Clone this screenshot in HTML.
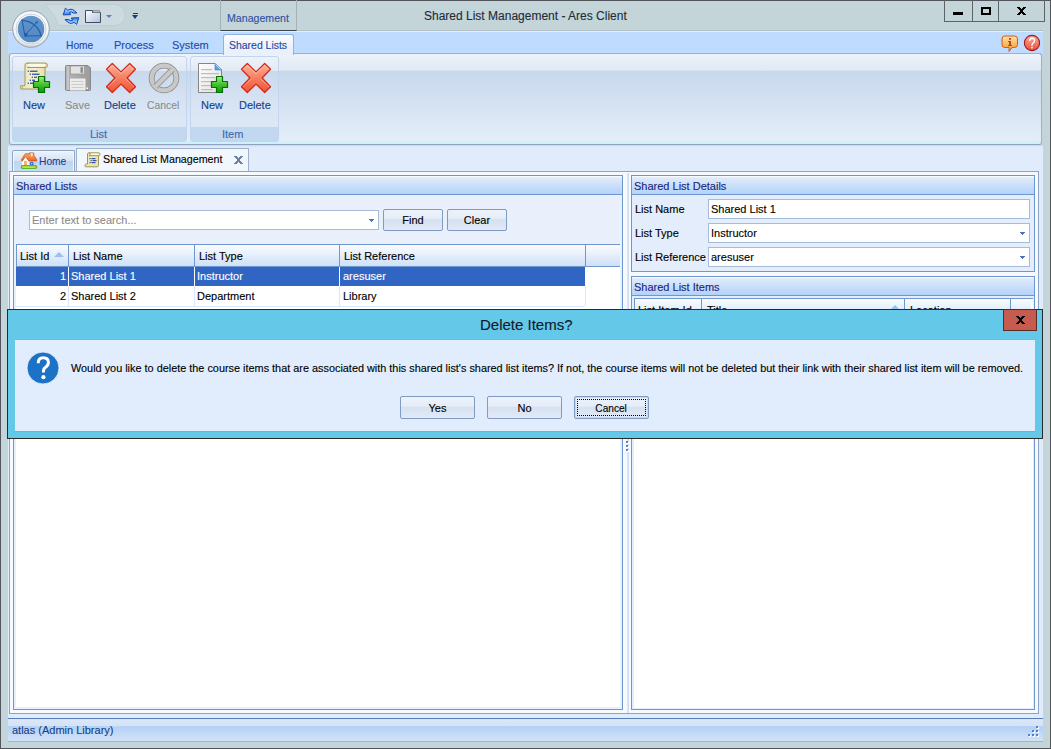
<!DOCTYPE html>
<html><head><meta charset="utf-8">
<style>
*{margin:0;padding:0;box-sizing:border-box}
html,body{width:1051px;height:749px;overflow:hidden;background:#c4d5da;font-family:"Liberation Sans",sans-serif;font-size:11px;color:#000}
.a{position:absolute}
.t{position:absolute;white-space:nowrap;line-height:13px;-webkit-text-stroke:0.12px currentColor}
.btn{position:absolute;border:1px solid #7f9bc4;border-radius:2px;background:linear-gradient(#edf3fb 0,#e4ecf7 45%,#d4e1f1 46%,#e2eaf6 100%);text-align:center;line-height:21px;-webkit-text-stroke:0.12px currentColor}
.hdr{position:absolute;background:linear-gradient(#f5f9fe,#cfe0f7)}
.cell{position:absolute;white-space:nowrap;line-height:13px}
</style></head><body>
<!-- window frame -->
<div class="a" style="left:0;top:0;width:1051px;height:749px;border:1px solid #51545b"></div>
<!-- title -->
<div class="t" style="left:424px;top:10px;font-size:12px;color:#222c38">Shared List Management - Ares Client</div>
<!-- window controls -->
<div class="a" style="left:944px;top:0;width:101px;height:22px;border:1px solid #5b6569;border-top:none"></div>
<div class="a" style="left:972px;top:0;width:1px;height:22px;background:#5b6569"></div>
<div class="a" style="left:998px;top:0;width:1px;height:22px;background:#5b6569"></div>
<div class="a" style="left:953px;top:12px;width:10px;height:3px;background:#000"></div>
<div class="a" style="left:981px;top:7px;width:10px;height:8px;border:2px solid #000"></div>
<svg class="a" style="left:1017px;top:7px" width="9" height="8" shape-rendering="crispEdges"><g fill="#000"><rect x="0" y="0" width="3" height="1"/><rect x="6" y="0" width="3" height="1"/><rect x="1" y="1" width="3" height="1"/><rect x="5" y="1" width="3" height="1"/><rect x="2" y="2" width="5" height="1"/><rect x="3" y="3" width="3" height="1"/><rect x="3" y="4" width="3" height="1"/><rect x="2" y="5" width="5" height="1"/><rect x="1" y="6" width="3" height="1"/><rect x="5" y="6" width="3" height="1"/><rect x="0" y="7" width="3" height="1"/><rect x="6" y="7" width="3" height="1"/></g></svg>

<!-- ribbon tab row -->
<div class="a" style="left:8px;top:30px;width:1035px;height:1px;background:#b3c0c6"></div>
<div class="a" style="left:8px;top:31px;width:1035px;height:23px;background:#bfdbff;border-top:1px solid #e3eefa"></div>
<!-- management contextual header -->
<div class="a" style="left:220px;top:0;width:77px;height:31px;border-left:1px solid #a3b3b8;border-right:1px solid #a3b3b8;border-bottom:1px solid #3a4448"></div>
<div class="t" style="left:227px;top:12px;color:#2d52a0;transform:scaleX(0.965);transform-origin:0 0">Management</div>
<!-- ribbon panel -->
<div class="a" style="left:9px;top:53px;width:1033px;height:92px;border:1px solid #8db2e3;border-bottom-color:#8ea2c0;border-radius:3px;background:linear-gradient(#eef3fa,#e1e9f4 18%,#c7d8ec 19%,#d5e2f2 55%,#e4eefa 97%,#cdf0fb 97%)"></div>
<!-- tabs -->
<div class="t" style="left:66px;top:39px;color:#1c4aa8;transform:scaleX(0.93);transform-origin:0 0">Home</div>
<div class="t" style="left:114px;top:39px;color:#1c4aa8">Process</div>
<div class="t" style="left:172px;top:39px;color:#1c4aa8">System</div>
<div class="a" style="left:223px;top:34px;width:71px;height:21px;border:1px solid #8db2e3;border-bottom:none;border-radius:3px 3px 0 0;background:linear-gradient(#fafcff,#ecf2fa 60%,#eaf0f9)"></div>
<div class="t" style="left:229px;top:39px;color:#1c4aa8;transform:scaleX(0.95);transform-origin:0 0">Shared Lists</div>

<!-- group List -->
<div class="a" style="left:12px;top:56px;width:175px;height:86px;border:1px solid #c2d5ec;border-radius:3px;background:linear-gradient(#eef3fa,#e1e9f4 16%,#c9d9ed 17%,#d9e5f4 60%,#e0eaf7)"></div>
<div class="a" style="left:13px;top:127px;width:173px;height:14px;background:#c2d8f0"></div>
<div class="t" style="left:23px;top:99px;color:#15428b">New</div>
<div class="t" style="left:65px;top:99px;color:#8d8d8d">Save</div>
<div class="t" style="left:104px;top:99px;color:#15428b">Delete</div>
<div class="t" style="left:147px;top:99px;color:#8d8d8d;transform:scaleX(0.94);transform-origin:0 0">Cancel</div>
<div class="t" style="left:90px;top:128px;color:#3e6aaa">List</div>
<!-- group Item -->
<div class="a" style="left:190px;top:56px;width:89px;height:86px;border:1px solid #c2d5ec;border-radius:3px;background:linear-gradient(#eef3fa,#e1e9f4 16%,#c9d9ed 17%,#d9e5f4 60%,#e0eaf7)"></div>
<div class="a" style="left:191px;top:127px;width:87px;height:14px;background:#c2d8f0"></div>
<div class="t" style="left:201px;top:99px;color:#15428b">New</div>
<div class="t" style="left:239px;top:99px;color:#15428b">Delete</div>
<div class="t" style="left:222px;top:128px;color:#3e6aaa">Item</div>

<!-- document tab area -->
<div class="a" style="left:8px;top:145px;width:1035px;height:574px;background:linear-gradient(#c9d5e6,#e0ebfb 2px)"></div>
<div class="a" style="left:12px;top:150px;width:63px;height:22px;border-radius:2px 2px 0 0;border:1px solid #8fa5c8;border-bottom:none;background:linear-gradient(#eef3fb,#d6e3f4 46%,#bfd4ee 48%,#c9dcf3);box-shadow:inset 1px 1px 0 #f4f8fd,inset -1px 0 0 #f4f8fd"></div>
<div class="t" style="left:39px;top:155px;color:#1c3f9c;transform:scaleX(0.93);transform-origin:0 0">Home</div>
<div class="a" style="left:76px;top:148px;width:173px;height:25px;border:1px solid #9cb0cf;border-bottom:none;background:#f2f7fd"></div>
<div class="t" style="left:103px;top:153px;color:#000;transform:scaleX(0.972);transform-origin:0 0">Shared List Management</div>
<svg class="a" style="left:234px;top:156px" width="9" height="8" shape-rendering="crispEdges"><g fill="#6e82a6"><rect x="0" y="0" width="3" height="1"/><rect x="6" y="0" width="3" height="1"/><rect x="1" y="1" width="3" height="1"/><rect x="5" y="1" width="3" height="1"/><rect x="2" y="2" width="5" height="1"/><rect x="3" y="3" width="3" height="1"/><rect x="3" y="4" width="3" height="1"/><rect x="2" y="5" width="5" height="1"/><rect x="1" y="6" width="3" height="1"/><rect x="5" y="6" width="3" height="1"/><rect x="0" y="7" width="3" height="1"/><rect x="6" y="7" width="3" height="1"/></g></svg>

<!-- content area -->
<div class="a" style="left:9px;top:171px;width:1030px;height:543px;border:1px solid #8ea4c6;background:#f6f9fe"></div>

<!-- left panel -->
<div class="a" style="left:13px;top:175px;width:610px;height:535px;border:1px solid #6e97d0;background:#e9f0fb"></div>
<div class="hdr" style="left:14px;top:176px;width:608px;height:18px;background:linear-gradient(#fff 0,#e0ebfa 10%,#b3d2f9)"></div>
<div class="a" style="left:14px;top:194px;width:608px;height:1px;background:#6e97d0"></div>
<div class="t" style="left:16px;top:180px;color:#1a2680">Shared Lists</div>
<!-- search -->
<div class="a" style="left:29px;top:210px;width:350px;height:20px;border:1px solid #a5bcdc;background:#fff"></div>
<div class="t" style="left:32px;top:214px;color:#8c8c8c">Enter text to search...</div>
<div class="btn" style="left:383px;top:209px;width:60px;height:22px">Find</div>
<div class="btn" style="left:447px;top:209px;width:60px;height:22px">Clear</div>
<!-- grid -->
<div class="a" style="left:16px;top:244px;width:604px;height:463px;background:#fff;border-top:1px solid #6e97d0"></div>

<!-- grid header -->
<div class="hdr" style="left:16px;top:245px;width:604px;height:21px;background:linear-gradient(#fafcff,#cfe0f7)"></div>
<div class="a" style="left:16px;top:266px;width:570px;height:1px;background:#6e97d0"></div>
<div class="a" style="left:586px;top:266px;width:34px;height:1px;background:#6e97d0"></div>
<div class="a" style="left:16px;top:245px;width:1px;height:21px;background:#6e97d0"></div>
<div class="a" style="left:68px;top:245px;width:1px;height:21px;background:#6e97d0"></div>
<div class="a" style="left:194px;top:245px;width:1px;height:21px;background:#6e97d0"></div>
<div class="a" style="left:339px;top:245px;width:1px;height:21px;background:#6e97d0"></div>
<div class="a" style="left:585px;top:245px;width:1px;height:21px;background:#6e97d0"></div>
<div class="t" style="left:20px;top:250px">List Id</div>
<div class="a" style="left:54px;top:252px;width:0;height:0;border-left:5px solid transparent;border-right:5px solid transparent;border-bottom:5px solid #9cc0ee"></div>
<div class="t" style="left:73px;top:250px">List Name</div>
<div class="t" style="left:199px;top:250px">List Type</div>
<div class="t" style="left:344px;top:250px">List Reference</div>
<!-- rows -->
<div class="a" style="left:16px;top:267px;width:569px;height:19px;background:#3165c4"></div>
<div class="a" style="left:68px;top:267px;width:1px;height:19px;background:#fff"></div>
<div class="a" style="left:194px;top:267px;width:1px;height:19px;background:#fff"></div>
<div class="a" style="left:339px;top:267px;width:1px;height:19px;background:#fff"></div>
<div class="t" style="left:60px;top:270px;color:#fff">1</div>
<div class="t" style="left:71px;top:270px;color:#fff">Shared List 1</div>
<div class="t" style="left:197px;top:270px;color:#fff">Instructor</div>
<div class="t" style="left:343px;top:270px;color:#fff">aresuser</div>
<div class="a" style="left:16px;top:306px;width:569px;height:1px;background:#dbe7f8"></div>
<div class="a" style="left:68px;top:286px;width:1px;height:20px;background:#dbe7f8"></div>
<div class="a" style="left:194px;top:286px;width:1px;height:20px;background:#dbe7f8"></div>
<div class="a" style="left:339px;top:286px;width:1px;height:20px;background:#dbe7f8"></div>
<div class="a" style="left:585px;top:286px;width:1px;height:20px;background:#dbe7f8"></div>
<div class="t" style="left:60px;top:290px">2</div>
<div class="t" style="left:71px;top:290px">Shared List 2</div>
<div class="t" style="left:197px;top:290px">Department</div>
<div class="t" style="left:343px;top:290px">Library</div>

<svg class="a" style="left:369px;top:219px" width="5" height="3" shape-rendering="crispEdges"><g fill="#4a74b4"><rect x="0" y="0" width="5" height="1"/><rect x="1" y="1" width="3" height="1"/><rect x="2" y="2" width="1" height="1"/></g></svg>
<!-- splitter -->
<div class="a" style="left:627px;top:173px;width:2px;height:540px;background:linear-gradient(90deg,#dde9f9,#c6dbf6)"></div>
<svg class="a" style="left:625px;top:440px" width="5" height="13" shape-rendering="crispEdges"><g fill="#fff"><rect x="2" y="2" width="2" height="2"/><rect x="2" y="6" width="2" height="2"/><rect x="2" y="10" width="2" height="2"/></g><g fill="#4a7cc8"><rect x="1" y="1" width="2" height="1"/><rect x="1" y="2" width="1" height="1"/><rect x="1" y="5" width="2" height="1"/><rect x="1" y="6" width="1" height="1"/><rect x="1" y="9" width="2" height="1"/><rect x="1" y="10" width="1" height="1"/></g><g fill="#7aa2dc"><rect x="2" y="2" width="1" height="1"/><rect x="2" y="6" width="1" height="1"/><rect x="2" y="10" width="1" height="1"/></g></svg>

<!-- right panel: details -->
<div class="a" style="left:631px;top:175px;width:404px;height:97px;border:1px solid #6e97d0;background:#e3edfb"></div>
<div class="hdr" style="left:632px;top:176px;width:402px;height:18px;background:linear-gradient(#fff 0,#e0ebfa 10%,#b3d2f9)"></div>
<div class="a" style="left:632px;top:194px;width:402px;height:1px;background:#6e97d0"></div>
<div class="t" style="left:634px;top:180px;color:#1a2680">Shared List Details</div>
<div class="t" style="left:635px;top:203px">List Name</div>
<div class="t" style="left:635px;top:227px">List Type</div>
<div class="t" style="left:635px;top:251px">List Reference</div>
<div class="a" style="left:708px;top:199px;width:322px;height:20px;border:1px solid #a5bcdc;background:#fff"></div>
<div class="a" style="left:708px;top:223px;width:322px;height:20px;border:1px solid #a5bcdc;background:#fff"></div>
<div class="a" style="left:708px;top:247px;width:322px;height:20px;border:1px solid #a5bcdc;background:#fff"></div>
<div class="t" style="left:711px;top:203px">Shared List 1</div>
<div class="t" style="left:711px;top:227px">Instructor</div>
<div class="t" style="left:711px;top:251px">aresuser</div>
<svg class="a" style="left:1020px;top:232px" width="5" height="3" shape-rendering="crispEdges"><g fill="#4a74b4"><rect x="0" y="0" width="5" height="1"/><rect x="1" y="1" width="3" height="1"/><rect x="2" y="2" width="1" height="1"/></g></svg>
<svg class="a" style="left:1020px;top:256px" width="5" height="3" shape-rendering="crispEdges"><g fill="#4a74b4"><rect x="0" y="0" width="5" height="1"/><rect x="1" y="1" width="3" height="1"/><rect x="2" y="2" width="1" height="1"/></g></svg>

<!-- right panel: items -->
<div class="a" style="left:631px;top:276px;width:404px;height:434px;border:1px solid #6e97d0;background:#e3edfb"></div>
<div class="hdr" style="left:632px;top:277px;width:402px;height:18px;background:linear-gradient(#fff 0,#e0ebfa 10%,#b3d2f9)"></div>
<div class="a" style="left:632px;top:295px;width:402px;height:1px;background:#6e97d0"></div>
<div class="t" style="left:634px;top:281px;color:#1a2680">Shared List Items</div>
<div class="a" style="left:634px;top:298px;width:399px;height:410px;background:#fff"></div>
<div class="a" style="left:634px;top:298px;width:399px;height:22px;border-left:1px solid #6e97d0;border-top:1px solid #6e97d0"></div>
<div class="hdr" style="left:635px;top:299px;width:396px;height:20px;background:linear-gradient(#fafcff,#cfe0f7)"></div>
<div class="a" style="left:701px;top:299px;width:1px;height:20px;background:#6e97d0"></div>
<div class="a" style="left:904px;top:299px;width:1px;height:20px;background:#6e97d0"></div>
<div class="a" style="left:1010px;top:299px;width:1px;height:20px;background:#6e97d0"></div>
<div class="t" style="left:638px;top:304px">List Item Id</div>
<div class="t" style="left:707px;top:304px">Title</div>
<div class="t" style="left:910px;top:304px">Location</div>
<div class="a" style="left:891px;top:305px;width:0;height:0;border-left:4px solid transparent;border-right:4px solid transparent;border-bottom:4px solid #9cc0ee"></div>

<!-- status bar -->
<div class="a" style="left:8px;top:718px;width:1035px;height:1px;background:#567db8"></div>
<div class="a" style="left:8px;top:719px;width:1035px;height:22px;background:linear-gradient(#dbe7f7,#d4e3f7 30%,#b4d0f5 35%,#c4dbf7 70%,#d1e2f8)"></div>
<div class="a" style="left:8px;top:741px;width:1035px;height:1px;background:#a7b4bb"></div>
<div class="t" style="left:12px;top:724px;color:#15428b">atlas (Admin Library)</div>


<svg class="a" style="left:0;top:0" width="130" height="30" viewBox="0 0 130 30"><path d="M44 4.5 H114 Q125 4.5 125 15 Q125 25.5 114 25.5 H58 Q56 14 44 4.5 Z" fill="#cddbe0" stroke="#bccdd3" stroke-width="1"/></svg>
<!-- ORB -->
<svg class="a" style="left:11px;top:9px" width="40" height="40" viewBox="0 0 40 40">
<defs>
<radialGradient id="orbring" cx="50%" cy="40%" r="60%"><stop offset="0" stop-color="#ffffff"/><stop offset="0.8" stop-color="#f4f6f8"/><stop offset="1" stop-color="#c8d0d8"/></radialGradient>
<linearGradient id="orbdisk" x1="0" y1="0" x2="0" y2="1"><stop offset="0" stop-color="#6496cc"/><stop offset="1" stop-color="#5287c2"/></linearGradient>
</defs>
<circle cx="20" cy="20" r="18.3" fill="url(#orbring)" stroke="#8c9aa6" stroke-width="0.9"/>
<circle cx="20" cy="20" r="15" fill="none" stroke="#c0c8d0" stroke-width="0.8"/>
<circle cx="20" cy="20" r="13.3" fill="url(#orbdisk)"/>
<g stroke="#2160ae" fill="none" stroke-linecap="round">
<path d="M11.1 11.1 L13.9 27 L30.1 26.8" stroke-width="1.1"/>
<path d="M11.1 11.1 Q 26.5 13.2 30.1 26.8" stroke-width="1.4"/>
<path d="M15.3 24.8 L25.4 13.6" stroke-width="1"/>
</g>
<path d="M24.2 13.6 L27.2 11.4 L26.2 14.8 Z" fill="#2160ae"/>
<path d="M13.4 23.2 L17 25.5 L15.6 27.8 L13.6 27.6 Z" fill="#2160ae"/>
</svg>

<!-- QAT pill -->

<!-- refresh icon -->
<svg class="a" style="left:62px;top:7px" width="18" height="18" viewBox="0 0 18 18">
<defs><linearGradient id="rf" x1="0" y1="0" x2="0" y2="1"><stop offset="0" stop-color="#e8f6ff"/><stop offset="0.45" stop-color="#7cc0f8"/><stop offset="1" stop-color="#2c7ee0"/></linearGradient></defs>
<path id="rtop" d="M1.2 7.9 L3.4 1.2 L5.9 3.3 Q10.2 0.2 14.9 6 L11.6 6.1 Q9.6 4.2 7.4 5.4 L8.7 7.6 Z" fill="url(#rf)" stroke="#1444b8" stroke-width="1" stroke-linejoin="round"/>
<path d="M1.2 7.9 L3.4 1.2 L5.9 3.3 Q10.2 0.2 14.9 6 L11.6 6.1 Q9.6 4.2 7.4 5.4 L8.7 7.6 Z" transform="rotate(180 9 9.3)" fill="url(#rf)" stroke="#1444b8" stroke-width="1" stroke-linejoin="round"/>
</svg>
<!-- file/folder icon -->
<svg class="a" style="left:85px;top:9px" width="17" height="15" viewBox="0 0 17 15">
<defs><linearGradient id="fd" x1="0" y1="0" x2="1" y2="1"><stop offset="0" stop-color="#ffffff"/><stop offset="1" stop-color="#aec0de"/></linearGradient></defs>
<path d="M0.5 1.5 H7.5 V3.5 H15.5 V13.5 H0.5 Z" fill="url(#fd)" stroke="#3c4c66" stroke-width="1"/>
<rect x="8" y="1.2" width="6.5" height="2.3" fill="#b8b8b8" stroke="#7a7a7a" stroke-width="0.5"/>
</svg>
<div class="a" style="left:106px;top:15px;width:0;height:0;border-left:3px solid transparent;border-right:3px solid transparent;border-top:3px solid #5b7fb0"></div>
<div class="a" style="left:133px;top:13px;width:5px;height:1px;background:#1a3a7a"></div>
<div class="a" style="left:132px;top:15px;width:0;height:0;border-left:3.5px solid transparent;border-right:3.5px solid transparent;border-top:4px solid #1a3a7a"></div>

<!-- info icon -->
<svg class="a" style="left:1001px;top:35px" width="18" height="18" viewBox="0 0 18 18">
<defs><linearGradient id="ig" x1="0" y1="0" x2="0" y2="1"><stop offset="0" stop-color="#ffe2a8"/><stop offset="0.5" stop-color="#ffb860"/><stop offset="1" stop-color="#f49a3a"/></linearGradient></defs>
<path d="M3.5 1 H13.5 Q16.5 1 16.5 4 V9.5 Q16.5 12.5 13.5 12.5 H11 L8 16.5 L8.2 12.5 H3.5 Q1 12.5 1 9.5 V4 Q1 1 3.5 1 Z" fill="url(#ig)" stroke="#cc5c1c" stroke-width="1"/>
<rect x="8" y="3" width="2" height="1.8" fill="#b84a22"/>
<path d="M7 6 H10 V10 H11 V11 H7 V10 H8 V7 H7 Z" fill="#b84a22"/>
</svg>
<!-- help icon -->
<svg class="a" style="left:1023px;top:34px" width="18" height="18" viewBox="0 0 18 18">
<defs><linearGradient id="hg" x1="0" y1="0" x2="0" y2="1"><stop offset="0" stop-color="#fcae98"/><stop offset="1" stop-color="#e6503a"/></linearGradient></defs>
<circle cx="9" cy="9" r="7.6" fill="url(#hg)" stroke="#a8141a" stroke-width="1.1"/>
<path d="M6.6 6.6 Q6.8 4.2 9.2 4.2 Q11.6 4.3 11.6 6.5 Q11.6 8 10 9 Q9 9.7 9 11.2" fill="none" stroke="#fff" stroke-width="1.4" stroke-linecap="round"/>
<circle cx="9" cy="13.6" r="0.9" fill="#fff"/>
</svg>

<!-- ribbon: scroll + plus -->
<svg class="a" style="left:19px;top:62px" width="33" height="33" viewBox="0 0 33 33">
<defs>
<linearGradient id="sc" x1="0" y1="0" x2="1" y2="0"><stop offset="0" stop-color="#e8e2b0"/><stop offset="0.5" stop-color="#f6f2cc"/><stop offset="1" stop-color="#e4dca4"/></linearGradient>
<linearGradient id="gp" x1="0" y1="0" x2="0" y2="1"><stop offset="0" stop-color="#9cf07a"/><stop offset="0.5" stop-color="#44c030"/><stop offset="1" stop-color="#0a9a0a"/></linearGradient>
</defs>
<path d="M6 3 Q6 1 8.5 1 H26 Q28.5 1 28.5 3.5 Q28.5 5.5 26 5.5 V26 Q26 27 25 27 H8 Q5 27 2 27 Q1 26.5 1.5 24 L6 23.5 Z" fill="url(#sc)" stroke="#a39a62" stroke-width="1"/>
<path d="M8.5 1 Q10.5 1 10.5 3.5 Q10.5 5.5 8.5 5.5 H26" fill="none" stroke="#a39a62" stroke-width="1"/>
<rect x="9" y="2" width="17" height="2.5" fill="#fffbe8"/>
<path d="M1.5 24 Q3.5 24 3.5 25.8 Q3.5 27 2.5 27" fill="#ece6b8" stroke="#a39a62" stroke-width="0.8"/>
<g fill="#3050a8">
<rect x="8.7" y="8.6" width="1.3" height="1.3"/><rect x="11" y="8.6" width="7.5" height="1.3"/>
<rect x="10.7" y="11.6" width="1.3" height="1.3"/><rect x="13" y="11.6" width="7.5" height="1.3"/>
<rect x="12.7" y="14.6" width="1.3" height="1.3"/><rect x="15" y="14.6" width="3" height="1.3"/>
<rect x="10.7" y="17.6" width="1.3" height="1.3"/><rect x="13" y="17.6" width="3" height="1.3"/>
<rect x="8.7" y="20.6" width="1.3" height="1.3"/><rect x="11" y="20.6" width="3" height="1.3"/>
</g>
<path d="M19.5 14.5 H25.5 V19.5 H30.5 V25.5 H25.5 V30.5 H19.5 V25.5 H14.5 V19.5 H19.5 Z" fill="url(#gp)" stroke="#067006" stroke-width="1.2" stroke-linejoin="round"/>
</svg>

<!-- floppy -->
<svg class="a" style="left:65px;top:65px" width="26" height="26" viewBox="0 0 26 26">
<defs><linearGradient id="fl" x1="0" y1="0" x2="1" y2="0"><stop offset="0" stop-color="#b4b4b4"/><stop offset="1" stop-color="#9c9c9c"/></linearGradient></defs>
<path d="M1.5 0.5 H23 L25.5 3 V24.5 Q25.5 25.5 24.5 25.5 H1.5 Q0.5 25.5 0.5 24.5 V1.5 Q0.5 0.5 1.5 0.5 Z" fill="url(#fl)" stroke="#888" stroke-width="1"/>
<rect x="2" y="1" width="2" height="24" fill="#d2d2d2" opacity="0.6"/>
<rect x="5.5" y="1" width="14" height="8" fill="#e2e2e2" stroke="#8c8c8c" stroke-width="0.6"/>
<rect x="15.5" y="2.2" width="2.4" height="5.6" fill="#8a8a8a"/>
<rect x="5" y="13.5" width="15.5" height="12" fill="#ececec"/>
<g fill="#c8c8c8"><rect x="6.5" y="16" width="12" height="0.9"/><rect x="6.5" y="19" width="12" height="0.9"/><rect x="6.5" y="22" width="12" height="0.9"/></g>
<rect x="21.5" y="22.5" width="1.5" height="1.5" fill="#fff"/>
</svg>

<!-- red X list delete -->
<svg class="a" style="left:105px;top:62px" width="32" height="32" viewBox="0 0 32 32">
<defs><linearGradient id="rx" x1="0" y1="0" x2="0" y2="1"><stop offset="0" stop-color="#fcb298"/><stop offset="0.55" stop-color="#f57a5c"/><stop offset="1" stop-color="#ee5634"/></linearGradient></defs>
<path d="M1.5 7.3 L7.3 1.5 L16 9.9 L24.7 1.5 L30.5 7.3 L22.1 16 L30.5 24.7 L24.7 30.5 L16 22.1 L7.3 30.5 L1.5 24.7 L9.9 16 Z" fill="url(#rx)" stroke="#d8281c" stroke-width="1.3" stroke-linejoin="round"/>
<path d="M3.2 7.3 L7.3 3.2 L16 11.6 L24.7 3.2 L28.8 7.3" fill="none" stroke="#fff" stroke-width="0.8" stroke-dasharray="1 0.7" opacity="0.9"/>
<path d="M3.2 24.7 L11.6 16.3 M28.8 24.7 L20.4 16.3" fill="none" stroke="#fff" stroke-width="0.8" stroke-dasharray="1 0.7" opacity="0.85"/>
</svg>

<!-- cancel -->
<svg class="a" style="left:148px;top:62px" width="32" height="32" viewBox="0 0 32 32">
<circle cx="16" cy="16" r="12.4" fill="none" stroke="#8c8c8c" stroke-width="5.8"/>
<circle cx="16" cy="16" r="12.4" fill="none" stroke="#c8c8c8" stroke-width="4.2"/>
<path d="M7.5 24.5 L24.5 7.5" stroke="#8c8c8c" stroke-width="5.8"/>
<path d="M6.8 25.2 L25.2 6.8" stroke="#c8c8c8" stroke-width="4.2"/>
</svg>

<!-- doc + plus -->
<svg class="a" style="left:197px;top:62px" width="33" height="33" viewBox="0 0 33 33">
<defs><linearGradient id="dc" x1="0" y1="0" x2="1" y2="1"><stop offset="0" stop-color="#ffffff"/><stop offset="1" stop-color="#e0e0e0"/></linearGradient>
<linearGradient id="gp2" x1="0" y1="0" x2="0" y2="1"><stop offset="0" stop-color="#9cf07a"/><stop offset="0.5" stop-color="#44c030"/><stop offset="1" stop-color="#0a9a0a"/></linearGradient></defs>
<path d="M1.5 1.5 H18 L24.5 8 V30.5 H1.5 Z" fill="url(#dc)" stroke="#858585" stroke-width="1"/>
<path d="M18 1.5 L24.5 8 H18 Z" fill="#5aa0e6" stroke="#3a80d0" stroke-width="0.6"/>
<path d="M18.5 2.5 L23.5 7.5" stroke="#fff" stroke-width="0.6"/>
<g fill="#bdbdbd"><rect x="4" y="7" width="11" height="1.2"/><rect x="4" y="11" width="18" height="1.2"/><rect x="4" y="15" width="14" height="1.2"/><rect x="4" y="19" width="12" height="1.2"/><rect x="4" y="23" width="12" height="1.2"/><rect x="4" y="27" width="12" height="1.2"/></g>
<path d="M19.5 14.5 H25.5 V19.5 H30.5 V25.5 H25.5 V30.5 H19.5 V25.5 H14.5 V19.5 H19.5 Z" fill="url(#gp2)" stroke="#067006" stroke-width="1.2" stroke-linejoin="round"/>
</svg>

<!-- red X item delete -->
<svg class="a" style="left:240px;top:62px" width="32" height="32" viewBox="0 0 32 32">
<path d="M1.5 7.3 L7.3 1.5 L16 9.9 L24.7 1.5 L30.5 7.3 L22.1 16 L30.5 24.7 L24.7 30.5 L16 22.1 L7.3 30.5 L1.5 24.7 L9.9 16 Z" fill="url(#rx)" stroke="#d8281c" stroke-width="1.3" stroke-linejoin="round"/>
<path d="M3.2 7.3 L7.3 3.2 L16 11.6 L24.7 3.2 L28.8 7.3" fill="none" stroke="#fff" stroke-width="0.8" stroke-dasharray="1 0.7" opacity="0.9"/>
<path d="M3.2 24.7 L11.6 16.3 M28.8 24.7 L20.4 16.3" fill="none" stroke="#fff" stroke-width="0.8" stroke-dasharray="1 0.7" opacity="0.85"/>
</svg>

<!-- home icon -->
<svg class="a" style="left:20px;top:152px" width="18" height="18" viewBox="0 0 18 18">
<defs><linearGradient id="rg" x1="0" y1="0" x2="0" y2="1"><stop offset="0" stop-color="#ffb070"/><stop offset="1" stop-color="#e8641e"/></linearGradient></defs>
<rect x="8.8" y="8.5" width="6.7" height="5" fill="#c4d0e6"/>
<path d="M2.2 13.5 V8.5 L5.5 4.5 L8.8 8.5 V13.5 Z" fill="#fcfdff"/>
<path d="M1.2 8.2 L4.8 2.4 L5.8 1.8 H9.3 V0.9 H13.8 V3.2 L16.8 7.8 V8.9 H8.7 L5.5 4.6 L2.4 9 Z" fill="url(#rg)" stroke="#c44c12" stroke-width="0.7" stroke-linejoin="round"/>
<rect x="10.6" y="1.6" width="2.4" height="0.9" fill="#fff"/><rect x="11.4" y="1.6" width="0.9" height="3" fill="#fff"/>
<rect x="4.2" y="9" width="2.5" height="4.7" fill="#f29a48"/>
<rect x="4.8" y="10.2" width="1.2" height="0.6" fill="#ffe0c0"/><rect x="4.8" y="11.8" width="1.2" height="0.6" fill="#ffe0c0"/>
<circle cx="11.7" cy="11.7" r="1.9" fill="#2a6ee6"/>
<path d="M11.2 11 L12.6 11.7 L11.2 12.4 Z" fill="#fff"/>
<rect x="1.4" y="13.6" width="15.2" height="2.8" rx="0.6" fill="#86d424" stroke="#44a414" stroke-width="0.8"/>
<path d="M2.6 15.1 H15.2" stroke="#e8ff70" stroke-width="0.8"/>
</svg>

<!-- tab scroll -->
<svg class="a" style="left:84px;top:152px" width="17" height="16" viewBox="0 0 17 16">
<path d="M3.5 2 Q3.5 0.8 5 0.8 H14.5 Q16 0.8 16 2.3 Q16 3.6 14.5 3.6 V13.5 Q14.5 14.8 13 14.8 H2 Q0.8 14.8 0.8 13.5 Q0.8 12 2.5 12 H3.5 Z" fill="#ede6b0" stroke="#958c4c" stroke-width="0.9"/>
<rect x="5.5" y="1.6" width="9" height="1.4" fill="#fffbe0"/>
<path d="M5 0.8 Q6.3 0.8 6.3 2.2 Q6.3 3.6 5 3.6 H14.5" fill="none" stroke="#958c4c" stroke-width="0.8"/>
<g fill="#3454a8"><rect x="5.5" y="6" width="1.2" height="1.2"/><rect x="7.5" y="6" width="4" height="1.2"/><rect x="6.5" y="8" width="1.2" height="1.2"/><rect x="8.5" y="8" width="4" height="1.2"/><rect x="5.5" y="10" width="1.2" height="1.2"/><rect x="7.5" y="10" width="4" height="1.2"/></g>
</svg>

<svg class="a" style="left:1026px;top:726px" width="14" height="13" shape-rendering="crispEdges"><g fill="#fff"><rect x="11" y="1" width="2" height="2"/><rect x="7" y="5" width="2" height="2"/><rect x="11" y="5" width="2" height="2"/><rect x="3" y="9" width="2" height="2"/><rect x="7" y="9" width="2" height="2"/><rect x="11" y="9" width="2" height="2"/></g><g fill="#4f80c8"><rect x="10" y="0" width="2" height="2"/><rect x="6" y="4" width="2" height="2"/><rect x="10" y="4" width="2" height="2"/><rect x="2" y="8" width="2" height="2"/><rect x="6" y="8" width="2" height="2"/><rect x="10" y="8" width="2" height="2"/></g></svg>
<!-- dialog -->
<div class="a" style="left:7px;top:309px;width:1036px;height:130px;border:1px solid #2a2a2a;background:#64c8e8"></div>
<div class="a" style="left:15px;top:339px;width:1020px;height:92px;background:#e1edfc;border-top:1px solid #7fb4cf"></div>
<div class="a" style="left:15px;top:431px;width:1020px;height:1px;background:#74b0cc"></div>
<div class="t" style="left:480px;top:316px;font-size:15px;line-height:17px;color:#101828">Delete Items?</div>
<div class="a" style="left:1003px;top:309px;width:34px;height:22px;border:1px solid #5a2a25;background:#c65b4f"></div>
<svg class="a" style="left:1016px;top:316px" width="9" height="8" shape-rendering="crispEdges"><g fill="#000"><rect x="0" y="0" width="3" height="1"/><rect x="6" y="0" width="3" height="1"/><rect x="1" y="1" width="3" height="1"/><rect x="5" y="1" width="3" height="1"/><rect x="2" y="2" width="5" height="1"/><rect x="3" y="3" width="3" height="1"/><rect x="3" y="4" width="3" height="1"/><rect x="2" y="5" width="5" height="1"/><rect x="1" y="6" width="3" height="1"/><rect x="5" y="6" width="3" height="1"/><rect x="0" y="7" width="3" height="1"/><rect x="6" y="7" width="3" height="1"/></g></svg>
<svg class="a" style="left:26px;top:351px" width="34" height="34" viewBox="0 0 34 34">
<circle cx="17" cy="17" r="16" fill="#1c72c6" stroke="#f4f8fc" stroke-width="0.8"/>
<path d="M12.2 12.2 Q12.2 6.8 17.2 6.8 Q22.4 6.8 22.4 11.6 Q22.4 14.4 19.6 16.2 Q17.4 17.6 17.4 20.6 V21.4" fill="none" stroke="#fff" stroke-width="3" stroke-linecap="butt"/>
<circle cx="17.4" cy="26.2" r="2.1" fill="#fff"/>
</svg>
<div class="t" style="left:71px;top:362px;transform:scaleX(0.9886);transform-origin:0 0">Would you like to delete the course items that are associated with this shared list's shared list items? If not, the course items will not be deleted but their link with their shared list item will be removed.</div>
<div class="btn" style="left:400px;top:396px;width:75px;height:23px;padding-top:1px">Yes</div>
<div class="btn" style="left:487px;top:396px;width:75px;height:23px;padding-top:1px">No</div>
<div class="btn" style="left:574px;top:396px;width:75px;height:23px;padding-top:1px;box-shadow:inset 0 0 0 1px #b9dcfa"><span style="display:inline-block;transform:scaleX(0.92)">Cancel</span></div>
<div class="a" style="left:577px;top:399px;width:69px;height:17px;border:1px dotted #000"></div>
</body></html>
